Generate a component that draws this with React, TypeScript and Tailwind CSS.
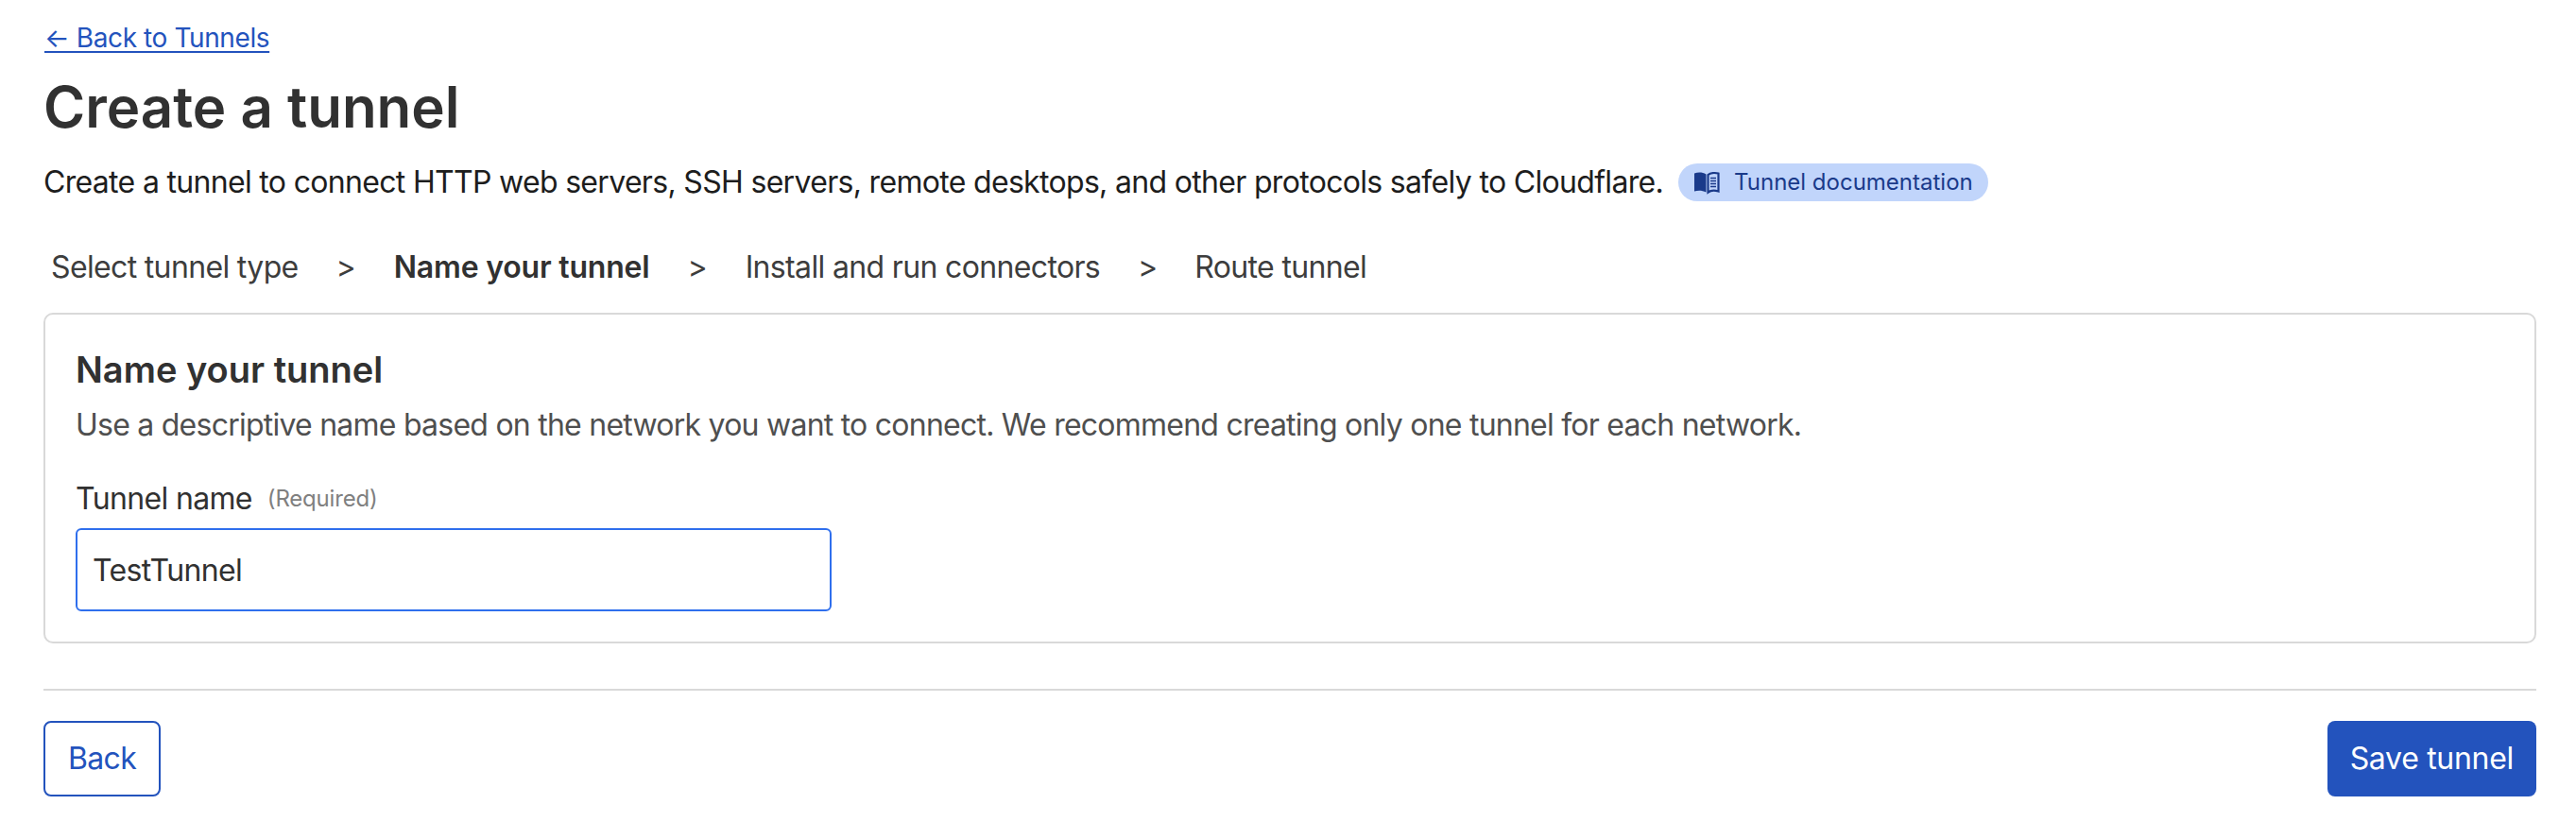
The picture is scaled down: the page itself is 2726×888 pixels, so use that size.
const font = { fontFamily: 'Inter, sans-serif', letterSpacing: '-0.65px' }

function BookIcon() {
  return (
    <svg className="w-[28px] h-[28px] shrink-0" viewBox="0 0 28 28" fill="none">
      <path d="M1 4.500C5 3 9.500 3 13.500 5.500v19C9.500 22.500 5 22.500 1 23.500z" fill="#1a3a8a" />
      <path d="M15.500 6C18 4 23 3.500 26.500 4.500v19c-3.500-1-8.500-.8-11 1z" fill="none" stroke="#1a3a8a" strokeWidth="2.200" />
      <path d="M18 9.500h6M18 12.500h6M18 15.500h6M18 18.500h6" stroke="#1a3a8a" strokeWidth="1.600" />
    </svg>
  )
}

function Step({ label, active = false }: { label: string; active?: boolean }) {
  return <span className={active ? 'font-semibold text-[#313131] tracking-[-0.2px]' : 'text-[#3d3d3d] tracking-[-0.65px]'}>{label}</span>
}

export default function App() {
  return (
    <div className="min-h-[888px] bg-white pl-[46px] pr-[42px] pt-[24px] text-[32px] text-[#1d1d1d] font-['Inter',sans-serif]">
      {/* Back link */}
      <a href="#" className="block w-fit pl-[1px] text-[28px] leading-[32px] text-[#2353bd] underline underline-offset-[4px] tracking-[-0.4px]">
        ← Back to Tunnels
      </a>

      <h1 className="mt-[21px] text-[60px] leading-[72px] font-semibold text-[#313131]">Create a tunnel</h1>

      <div className="mt-[20px] flex items-center h-[48px]">
        <span className="leading-[40px] tracking-[-0.68px]">
          Create a tunnel to connect HTTP web servers, SSH servers, remote desktops, and other protocols safely to Cloudflare.
        </span>
        <span className="ml-[16px] flex items-center gap-[15px] h-[40px] px-[16px] rounded-full bg-[#c1d5fb] text-[24px] text-[#1a3a8a]">
          <BookIcon />
          Tunnel documentation
        </span>
      </div>

      {/* Steps */}
      <div className="mt-[42px] flex items-center h-[48px] pl-[8px] text-[32px]">
        <Step label="Select tunnel type" />
        <span className="mx-[40px] text-[#3d3d3d]">&gt;</span>
        <Step label="Name your tunnel" active />
        <span className="mx-[40px] text-[#3d3d3d]">&gt;</span>
        <Step label="Install and run connectors" />
        <span className="ml-[40px] mr-[39px] text-[#3d3d3d]">&gt;</span>
        <Step label="Route tunnel" />
      </div>

      {/* Card */}
      <div className="mt-[24px] h-[350px] rounded-[10px] border-2 border-[#d9d9d9] px-[32px] pt-[32px]">
        <h2 className="text-[38px] leading-[52px] font-semibold text-[#313131]">Name your tunnel</h2>
        <p className="mt-[13px] leading-[40px] text-[#4f4f4f] tracking-[-0.76px]">
          Use a descriptive name based on the network you want to connect. We recommend creating only one tunnel for each network.
        </p>
        <div className="mt-[38px] flex items-center gap-[16px] h-[40px]">
          <span className="text-[#313131] tracking-[-0.65px]">Tunnel name</span>
          <span className="text-[24px] text-[#808080] tracking-[-0.2px]">(Required)</span>
        </div>
        <input
          readOnly
          value="TestTunnel"
          className="mt-[11px] block w-[800px] h-[88px] rounded-[6px] border-2 border-[#2f6fed] px-[16px] text-[#313131] outline-none"
          style={font}
        />
      </div>

      <div className="mt-[48px] h-[2px] bg-[#d9d9d9]" />

      {/* Actions */}
      <div className="mt-[32px] flex justify-between">
        <button className="h-[80px] px-[24px] rounded-[8px] border-2 border-[#2353bd] text-[#2353bd] tracking-[-0.65px]">Back</button>
        <button className="h-[80px] px-[24px] rounded-[8px] bg-[#2353bd] text-white tracking-[-0.3px]">Save tunnel</button>
      </div>
    </div>
  )
}
